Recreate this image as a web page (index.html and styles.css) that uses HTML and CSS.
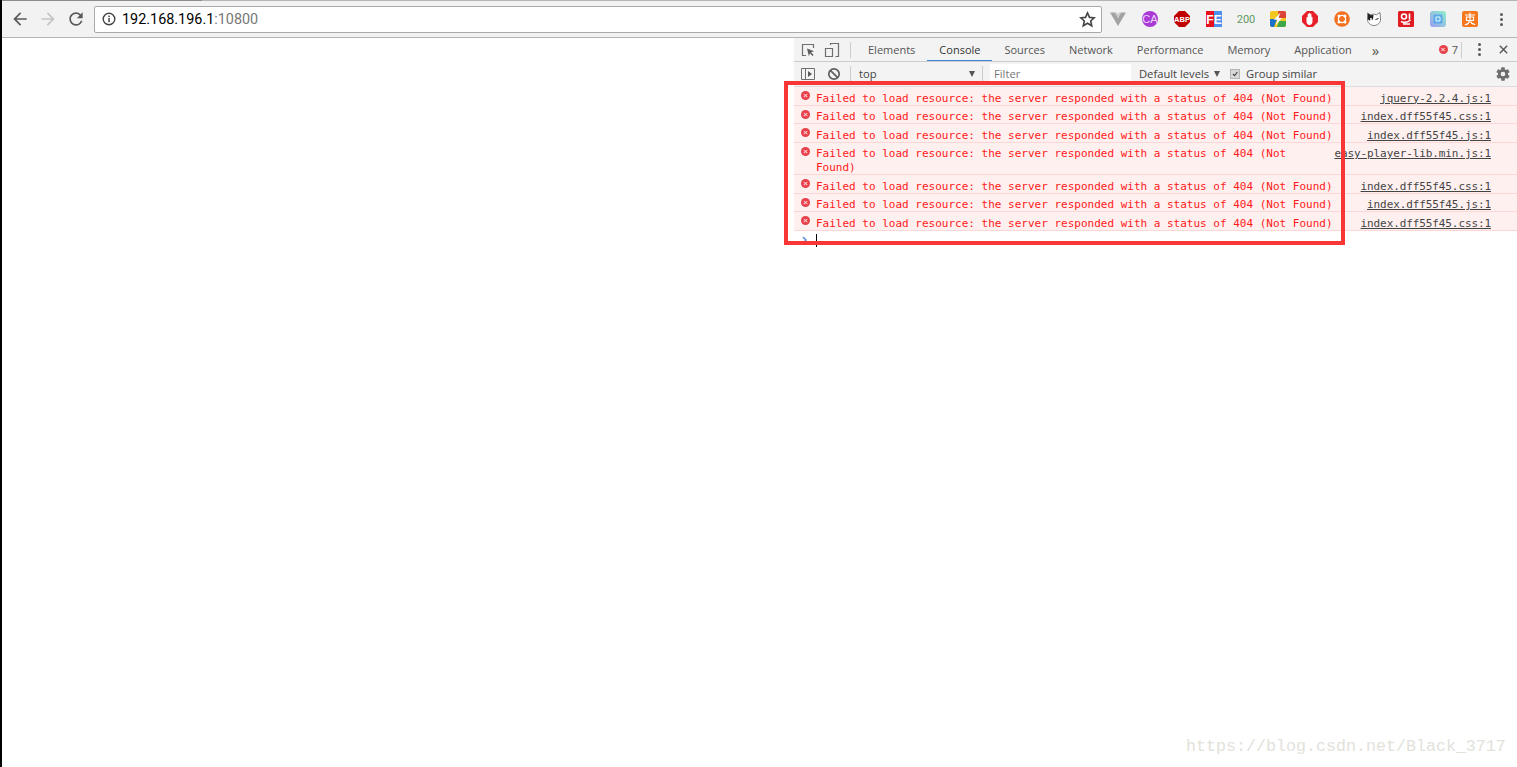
FILE: index.html
```html
<!DOCTYPE html>
<html lang="en">

<head>
    <meta charset="UTF-8">
    <title>192.168.196.1:10800</title>
    <link rel="stylesheet" href="styles.css">
</head>

<body>
    <div class="tabstrip"><div class="tab-edge"></div></div>
    <header class="toolbar">
        <div class="nav">
            <button class="nav-btn"><svg viewBox="0 0 24 24" class="nav-icon"><path fill="#5a5a5a" d="M20 11H7.83l5.59-5.59L12 4l-8 8 8 8 1.41-1.41L7.83 13H20z"/></svg></button>
            <button class="nav-btn"><svg viewBox="0 0 24 24" class="nav-icon"><path fill="#c4c4c4" d="M4 11h12.17l-5.59-5.59L12 4l8 8-8 8-1.41-1.41L16.17 13H4z"/></svg></button>
            <button class="nav-btn"><svg viewBox="0 0 24 24" class="nav-icon"><path fill="#5a5a5a" d="M17.65 6.35A7.958 7.958 0 0 0 12 4c-4.42 0-7.99 3.58-7.99 8s3.57 8 7.99 8c3.73 0 6.84-2.55 7.73-6h-2.08A5.99 5.99 0 0 1 12 18c-3.31 0-6-2.69-6-6s2.69-6 6-6c1.66 0 3.14.69 4.22 1.78L13 11h7V4l-2.35 2.35z"/></svg></button>
        </div>
        <div class="omnibox">
            <svg viewBox="0 0 14 14" class="info-icon"><circle cx="7" cy="7" r="5.8" fill="none" stroke="#444" stroke-width="1.4"/><rect x="6.3" y="6" width="1.5" height="4.2" fill="#444"/><rect x="6.3" y="3.6" width="1.5" height="1.5" fill="#444"/></svg>
            <span class="url">192.168.196.1<span class="url-port">:10800</span></span>
            <svg viewBox="0 0 16 16" class="star-icon"><path fill="none" stroke="#444" stroke-width="1.5" stroke-linejoin="miter" d="M8 1.8l1.9 4.2 4.5.4-3.4 3 1 4.5L8 11.5l-4 2.4 1-4.5-3.4-3 4.500-.4z"/></svg>
        </div>
        <div class="ext"><svg viewBox="0 0 16 16" class="ext-icon"><path fill="#a3a3a3" d="M0 1.5h5L8 7l3-5.500h5L8 15z"/><path fill="#c9c9c9" d="M5 1.500L8 7l3-5.500h-1.800L8 3.800 6.800 1.500z"/></svg></div>
        <div class="ext"><svg viewBox="0 0 16 16" class="ext-icon"><circle cx="8" cy="8" r="8" fill="#a93ad6"/><text x="8" y="12" class="ext-text ext-ca">CA</text></svg></div>
        <div class="ext"><svg viewBox="0 0 16 16" class="ext-icon"><path fill="#c00000" d="M5 0h6l5 5v6l-5 5H5l-5-5V5z"/><text x="8" y="10.800" class="ext-text ext-abp">ABP</text></svg></div>
        <div class="ext"><svg viewBox="0 0 16 16" class="ext-icon"><rect width="8" height="16" fill="#e8101c"/><rect x="8" width="8" height="16" fill="#4e90ee"/><text x="8" y="12.500" class="ext-text ext-fe">FE</text></svg></div>
        <div class="ext"><span class="ext-count">200</span></div>
        <div class="ext"><svg viewBox="0 0 16 16" class="ext-icon"><rect width="16" height="16" rx="2" fill="#f2c81e"/><path fill="#1a73c8" d="M0 8h7l-3 8H2a2 2 0 0 1-2-2z"/><path fill="#3fa64a" d="M7 16l2-6h7v4a2 2 0 0 1-2 2z"/><path fill="#dc4437" d="M8 0h6a2 2 0 0 1 2 2v5H9z"/><path fill="#fff" d="M10.500 1.500L4 8.800h3.500L5.500 14.500 12 7H8.500z"/></svg></div>
        <div class="ext"><svg viewBox="0 0 16 16" class="ext-icon"><path fill="#e8202a" d="M5 0h6l5 5v6l-5 5H5l-5-5V5z"/><path fill="#fff" d="M4.500 6.500c0-.8 1.200-.8 1.200 0V3.200c0-.8 1.200-.8 1.200 0V2.500c0-.8 1.300-.8 1.300 0v.7c0-.8 1.200-.8 1.200 0v3c0-.6 1.100-.6 1.100.1v4.200c0 1.700-1.200 3.500-3 3.500s-3-1.700-3-3.500z"/></svg></div>
        <div class="ext"><svg viewBox="0 0 16 16" class="ext-icon"><circle cx="8" cy="8" r="7.800" fill="#f5701e"/><circle cx="8" cy="8" r="3.600" fill="none" stroke="#fff" stroke-width="1.300"/><circle cx="5" cy="5" r="1.500" fill="#fff"/><circle cx="11" cy="5" r="1.500" fill="#fff"/><circle cx="5" cy="11" r="1.500" fill="#fff"/><circle cx="11" cy="11" r="1.500" fill="#fff"/></svg></div>
        <div class="ext"><svg viewBox="0 0 16 16" class="ext-icon"><path fill="#fff" stroke="#666" stroke-width=".8" d="M1.500 2l3 1.800c2-.8 4-.8 6 0L14 1.500l.5 6.500c.5 3.500-3 6.500-6.500 6.500S1 11.500 1.500 8z"/><path fill="#222" d="M2 2.500l3.200 1.800C7 3.600 7.500 4 7.500 4L7 8.500 3 9.500 1.800 8z"/><circle cx="5" cy="8" r="1" fill="#fff"/><path stroke="#222" fill="none" d="M9.500 8.500l3-1"/></svg></div>
        <div class="ext"><svg viewBox="0 0 16 16" class="ext-icon"><rect width="16" height="16" rx="1.500" fill="#e01b22"/><circle cx="6" cy="5.500" r="2.500" fill="none" stroke="#fff" stroke-width="1.600"/><path fill="none" stroke="#fff" stroke-width="1.600" d="M11.500 2.500v6M3 10.500c3 1.500 6 1.500 9.500-1.500M12 13H5"/></svg></div>
        <div class="ext"><svg viewBox="0 0 16 16" class="ext-icon"><defs><linearGradient id="glass" x1="0" y1="1" x2="1" y2="0"><stop offset="0" stop-color="#9a9cf5"/><stop offset="1" stop-color="#8ef0c8"/></linearGradient></defs><rect width="16" height="16" rx="3" fill="url(#glass)"/><rect x="3.500" y="3.500" width="9" height="9" rx="1" fill="#5fa8e8"/><path fill="none" stroke="#dff" d="M6 6h4v4H6z"/></svg></div>
        <div class="ext"><svg viewBox="0 0 16 16" class="ext-icon"><rect width="16" height="16" rx="2" fill="#f5781e"/><path fill="none" stroke="#fff" stroke-width="1.200" d="M3 4h10M8 1.800V10M4.500 6h7v3.500h-7zM2.800 13.500c2 .6 3.500-.5 4.700-3.500M8.500 10.500c1 2 2.500 3 4.700 3"/></svg></div>
        <div class="menu-btn"><span class="dot"></span><span class="dot"></span><span class="dot"></span></div>
    </header>

    <main class="content">
        <div class="page"></div>
        <section class="devtools">
            <div class="dt-tabs">
                <svg viewBox="0 0 16 16" class="dt-icon dt-inspect"><path fill="none" stroke="#6e6e6e" stroke-width="1.200" d="M6 13.500H2.500v-11h11V6"/><path fill="#5a5a5a" d="M7 6.500l7 2.800-3 1 2.600 2.800-1 1-2.700-2.800-1 3z"/></svg>
                <svg viewBox="0 0 16 16" class="dt-icon dt-device"><path fill="none" stroke="#6e6e6e" stroke-width="1.200" d="M6.500 3V1.500h8v13h-3M1.500 6.500h7v8h-7z"/></svg>
                <span class="dt-sep"></span>
                <span class="dt-tab">Elements</span>
                <span class="dt-tab dt-tab-active">Console</span>
                <span class="dt-tab">Sources</span>
                <span class="dt-tab">Network</span>
                <span class="dt-tab">Performance</span>
                <span class="dt-tab">Memory</span>
                <span class="dt-tab">Application</span>
                <span class="dt-more">»</span>
                <span class="dt-errors"><span class="err-dot err-dot-big"></span>7</span>
                <span class="dt-sep dt-sep-right"></span>
                <span class="dt-menu"><span class="dot"></span><span class="dot"></span><span class="dot"></span></span>
                <svg viewBox="0 0 12 12" class="dt-close"><path stroke="#5a5a5a" stroke-width="1.600" d="M2 2l8 8M10 2l-8 8"/></svg>
            </div>
            <div class="dt-filters">
                <svg viewBox="0 0 16 16" class="dt-icon dt-panel"><path fill="none" stroke="#6e6e6e" d="M1.500 2.500h13v11h-13zM5.500 2.500v11"/><path fill="#5a5a5a" d="M8 5l4 3-4 3z"/></svg>
                <svg viewBox="0 0 14 14" class="dt-clear"><circle cx="7" cy="7" r="5.200" fill="none" stroke="#5f5f5f" stroke-width="1.700"/><path stroke="#5f5f5f" stroke-width="1.700" d="M3.300 3.300l7.400 7.400"/></svg>
                <span class="dt-sep"></span>
                <div class="context">top<span class="arrow"></span></div>
                <span class="dt-sep"></span>
                <div class="filter">Filter</div>
                <div class="levels">Default levels<span class="arrow"></span></div>
                <label class="group"><span class="check"><svg viewBox="0 0 10 10"><path fill="none" stroke="#444" stroke-width="1.400" d="M2.500 5l2 2 3.500-4.500"/></svg></span>Group similar</label>
                <svg viewBox="0 0 24 24" class="gear"><path fill="#6e6e6e" d="M19.430 12.980c.04-.32.07-.64.07-.98s-.03-.66-.07-.98l2.110-1.650c.19-.15.240-.42.120-.64l-2-3.460c-.12-.22-.39-.3-.61-.22l-2.490 1c-.52-.4-1.080-.73-1.690-.98l-.38-2.650A.488.488 0 0 0 14 2h-4c-.25 0-.46.18-.49.42l-.38 2.650c-.61.25-1.170.59-1.690.98l-2.490-1c-.23-.09-.49 0-.61.22l-2 3.460c-.13.22-.07.49.12.64l2.110 1.650c-.04.32-.07.65-.07.98s.03.66.07.98l-2.110 1.650c-.19.15-.24.42-.12.64l2 3.460c.12.22.39.3.61.22l2.490-1c.52.4 1.080.73 1.690.98l.38 2.650c.03.24.24.42.49.42h4c.25 0 .46-.18.49-.42l.38-2.650c.61-.25 1.170-.59 1.690-.98l2.490 1c.23.09.49 0 .61-.22l2-3.460c.12-.22.07-.49-.12-.64l-2.110-1.650zM12 15.500a3.500 3.500 0 1 1 0-7 3.500 3.500 0 0 1 0 7z"/></svg>
            </div>
            <div class="log">
                <div class="msg"><span class="err-dot"></span><a class="src">jquery-2.2.4.js:1</a>Failed to load resource: the server responded with a status of 404 (Not Found)</div>
                <div class="msg"><span class="err-dot"></span><a class="src">index.dff55f45.css:1</a>Failed to load resource: the server responded with a status of 404 (Not Found)</div>
                <div class="msg"><span class="err-dot"></span><a class="src">index.dff55f45.js:1</a>Failed to load resource: the server responded with a status of 404 (Not Found)</div>
                <div class="msg msg-wrapped"><span class="err-dot"></span><a class="src">easy-player-lib.min.js:1</a>Failed to load resource: the server responded with a status of 404 (Not Found)</div>
                <div class="msg"><span class="err-dot"></span><a class="src">index.dff55f45.css:1</a>Failed to load resource: the server responded with a status of 404 (Not Found)</div>
                <div class="msg"><span class="err-dot"></span><a class="src">index.dff55f45.js:1</a>Failed to load resource: the server responded with a status of 404 (Not Found)</div>
                <div class="msg"><span class="err-dot"></span><a class="src">index.dff55f45.css:1</a>Failed to load resource: the server responded with a status of 404 (Not Found)</div>
                <div class="prompt"><svg viewBox="0 0 8 8" class="chevron"><path fill="none" stroke="#5b8fe0" stroke-width="1.500" d="M2 1l3 3-3 3"/></svg><span class="caret"></span></div>
            </div>
        </section>
    </main>

    <div class="highlight"></div>
    <div class="watermark">https://blog.csdn.net/Black_3717</div>
</body>

</html>
```

FILE: styles.css
```css
html,
body {
    height: 100%;
}

body {
    margin: 0;
    border-left: 2px solid #000;
    height: 767px;
    overflow: hidden;
    background: #fff;
    font-family: 'Open Sans', sans-serif;
    position: relative;
    display: flex;
    flex-direction: column;
}

/* browser chrome */
.tabstrip {
    height: 1px;
    background: #b4b4b4;
    flex: none;
}

.tab-edge {
    width: 200px;
    height: 1px;
    background: #8c8c8c;
}

.toolbar {
    display: flex;
    align-items: center;
    height: 37px;
    flex: none;
    background: #f2f2f2;
    border-bottom: 1px solid #b4b4b4;
    box-sizing: border-box;
}

.nav {
    display: flex;
    padding-left: 4px;
    margin-right: 4px;
}

.nav-btn {
    width: 28px;
    height: 28px;
    padding: 0;
    border: none;
    background: none;
    display: flex;
    align-items: center;
    justify-content: center;
}

.nav-icon {
    width: 20px;
    height: 20px;
}

.omnibox {
    flex: 1;
    height: 27px;
    display: flex;
    align-items: center;
    box-sizing: border-box;
    background: #fff;
    border: 1px solid #a9a9a9;
    border-radius: 2px;
    padding: 0 5px 0 7px;
}

.info-icon {
    width: 14px;
    height: 14px;
    margin-right: 6px;
}

.url {
    flex: 1;
    font-family: 'Roboto', sans-serif;
    font-size: 14.400px;
    color: #000;
}

.url-port {
    color: #777;
}

.star-icon {
    width: 17px;
    height: 17px;
}

.ext {
    width: 32px;
    height: 28px;
    flex: none;
    display: flex;
    align-items: center;
    justify-content: center;
}

.ext-icon {
    width: 16px;
    height: 16px;
}

.ext-text {
    font-family: 'Liberation Sans', sans-serif;
    font-weight: bold;
    fill: #fff;
    text-anchor: middle;
}

.ext-ca {
    font-size: 11px;
    font-weight: normal;
    fill: #eed5f7;
}

.ext-abp {
    font-size: 7.500px;
}

.ext-fe {
    font-size: 12px;
}

.ext-count {
    font-family: 'Roboto', sans-serif;
    font-size: 11px;
    color: #5f9a62;
}

.menu-btn {
    width: 31px;
    display: flex;
    flex-direction: column;
    align-items: center;
    gap: 2px;
}

.dot {
    width: 3px;
    height: 3px;
    border-radius: 50%;
    background: #5a5a5a;
}

/* page + devtools */
.content {
    flex: 1;
    display: flex;
    min-height: 0;
}

.page {
    flex: 1;
}

.devtools {
    width: 723px;
    flex: none;
    font-size: 11.200px;
    color: #333;
    display: flex;
    flex-direction: column;
}

.dt-tabs {
    display: flex;
    align-items: center;
    height: 24px;
    background: #f3f3f3;
    border-bottom: 1px solid #ccc;
    box-sizing: border-box;
    flex: none;
    font-size: 11px;
}

.dt-icon {
    width: 16px;
    height: 16px;
    flex: none;
}

.dt-inspect {
    margin-left: 6px;
}

.dt-device {
    margin-left: 8px;
}

.dt-sep {
    width: 1px;
    height: 16px;
    background: #ccc;
    margin: 0 5px 0 10px;
    flex: none;
}

.dt-tab {
    height: 23px;
    line-height: 23px;
    padding: 0 12px;
    color: #555;
    box-sizing: border-box;
}

.dt-tab-active {
    color: #333;
    border-bottom: 1px solid #3b86d6;
}

.dt-more {
    font-size: 15px;
    line-height: 20px;
    color: #555;
    margin-left: 8px;
    width: 12px;
}

.dt-errors {
    margin-left: auto;
    display: flex;
    align-items: center;
    gap: 4px;
    color: #555;
}

.dt-sep-right {
    margin: 0 0 0 3px;
}

.dt-menu {
    display: flex;
    flex-direction: column;
    gap: 2px;
    margin: 0 17px 0 16px;
}

.dt-close {
    width: 11px;
    height: 11px;
    margin-right: 8px;
    flex: none;
}

.dt-filters {
    display: flex;
    align-items: center;
    height: 25px;
    padding-bottom: 1px;
    background: #f3f3f3;
    border-bottom: 1px solid #ddd;
    box-sizing: border-box;
    flex: none;
}

.dt-panel {
    margin-left: 6px;
}

.dt-clear {
    width: 14px;
    height: 14px;
    margin-left: 11px;
    flex: none;
}

.dt-filters .dt-sep {
    margin: 0 0 0 9px;
}

.context {
    width: 131px;
    padding: 0 7px 0 8px;
    display: flex;
    justify-content: space-between;
    align-items: center;
    box-sizing: border-box;
    color: #444;
}

.arrow {
    display: inline-block;
    width: 0;
    height: 0;
    border-left: 3.500px solid transparent;
    border-right: 3.500px solid transparent;
    border-top: 6px solid #555;
}

.dt-filters .context + .dt-sep {
    margin: 0;
}

.filter {
    width: 141px;
    height: 19px;
    line-height: 19px;
    margin-left: 7px;
    padding-left: 4px;
    box-sizing: border-box;
    background: #fff;
    color: #777;
}

.levels {
    margin-left: 8px;
    display: flex;
    align-items: center;
    gap: 5px;
    color: #444;
}

.group {
    margin-left: 10px;
    display: flex;
    align-items: center;
    gap: 6px;
    color: #444;
}

.check {
    width: 10px;
    height: 10px;
    background: #d8d8d8;
    border: 1px solid #b5b5b5;
    box-sizing: border-box;
    display: flex;
}

.check svg {
    width: 8px;
    height: 8px;
}

.gear {
    width: 16px;
    height: 16px;
    margin-left: auto;
    margin-right: 6px;
}

.log {
    font-family: 'DejaVu Sans Mono', monospace;
    font-size: 11px;
    line-height: 14px;
}

.msg {
    height: 18.570px;
    box-sizing: border-box;
    background: #fff0f0;
    color: #ff1a1a;
    border-bottom: 1px solid #ffd6d6;
    padding: 4.570px 26px 0 22px;
    position: relative;
}

.msg-wrapped {
    height: 32.570px;
}

.src {
    float: right;
    margin-left: 10px;
    color: #444;
    letter-spacing: -0.100px;
    text-decoration: underline;
}

.err-dot {
    position: absolute;
    left: 7px;
    top: 4px;
    width: 9px;
    height: 9px;
    border-radius: 50%;
    background: #e8404a;
}

.err-dot::after {
    content: "×";
    display: block;
    font: bold 8px/9px 'Liberation Sans', sans-serif;
    color: #fbd5d5;
    text-align: center;
}

.err-dot-big {
    position: static;
    display: block;
}

.prompt {
    display: flex;
    align-items: center;
    height: 18px;
    padding-left: 7px;
    position: relative;
}

.chevron {
    width: 8px;
    height: 8px;
}

.caret {
    position: absolute;
    left: 22px;
    top: 3px;
    width: 1px;
    height: 13px;
    background: #000;
}

/* annotation drawn over the screenshot */
.highlight {
    position: absolute;
    left: 782px;
    top: 81px;
    width: 561px;
    height: 164px;
    border: 4px solid #f93636;
    box-sizing: border-box;
}

.watermark {
    position: absolute;
    left: 1184px;
    top: 737px;
    font-family: 'Liberation Mono', monospace;
    font-size: 16.670px;
    line-height: 20px;
    color: #e2e2db;
}
```
